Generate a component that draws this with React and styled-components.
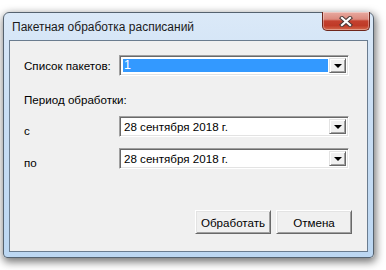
import React from 'react';
import styled, { createGlobalStyle } from 'styled-components';

const Global = createGlobalStyle`
  html, body {
    margin: 0;
    background: #ffffff;
  }
  body {
    font-family: 'Liberation Sans', Arial, sans-serif;
  }
`;

const Desktop = styled.div`
  width: 386px;
  height: 270px;
  padding: 12px 0 0 3px;
  box-sizing: border-box;
  overflow: hidden;
`;

const Window = styled.div`
  width: 371px;
  height: 246px;
  box-sizing: border-box;
  border: 1px solid #55626f;
  border-radius: 6px 6px 4px 4px;
  background: linear-gradient(to bottom, #dbe9f8 0%, #c9def4 40%, #bcd7f2 100%);
  box-shadow: 1px 3px 9px 1px rgba(0, 0, 0, 0.55);
  display: flex;
  flex-direction: column;
`;

const TitleBar = styled.div`
  height: 27px;
  display: flex;
  align-items: flex-start;
  justify-content: space-between;
  padding: 0 3px 0 8px;
`;

const Title = styled.span`
  align-self: center;
  font-size: 12px;
  line-height: 14px;
  color: #1a1a1a;
  margin-top: 1px;
`;

const CloseButton = styled.div`
  margin-top: -1px;
  width: 48px;
  height: 19px;
  box-sizing: border-box;
  border: 1px solid #6e261c;
  border-top: none;
  border-radius: 0 0 5px 5px;
  background: linear-gradient(
    to bottom,
    #e8aaa0 0%,
    #dc8a7e 40%,
    #c4412f 50%,
    #bf3a27 75%,
    #d4694d 100%
  );
  box-shadow: inset 0 0 0 1px rgba(255, 255, 255, 0.35);
  display: flex;
  align-items: center;
  justify-content: center;
`;

const Frame = styled.div`
  flex: 1;
  padding: 0 5px 5px 5px;
  display: flex;
`;

const Client = styled.div`
  flex: 1;
  border: 1px solid #6a7c8f;
  background: #f0f0f0;
  padding: 14px 15px 17px 14px;
  display: flex;
  flex-direction: column;
  font-size: 11.6px;
  color: #000;
`;

const Row = styled.div`
  display: flex;
  align-items: center;
  margin-top: ${(p) => p.$gap || 0}px;
`;

const Label = styled.div`
  width: 95px;
  line-height: 13px;
  padding-top: ${(p) => p.$shift || 0}px;
`;

const Heading = styled.div`
  line-height: 13px;
  margin-top: 17px;
`;

const Combo = styled.div`
  width: 230px;
  height: 21px;
  box-sizing: border-box;
  border-top: 1px solid #a0a0a0;
  border-left: 1px solid #a0a0a0;
  border-right: 1px solid #ffffff;
  border-bottom: 1px solid #ffffff;
  box-shadow: inset 1px 1px 0 #696969, inset -1px -1px 0 #e3e3e3;
  background: #ffffff;
  padding: 2px;
  display: flex;
`;

const Value = styled.div`
  flex: 1;
  margin: 1px;
  padding-left: 1px;
  line-height: 13px;
  background: ${(p) => (p.$selected ? '#3399ff' : 'transparent')};
  color: ${(p) => (p.$selected ? '#ffffff' : '#000000')};
  font-size: ${(p) => (p.$selected ? '12.5px' : '11.6px')};
  white-space: nowrap;
  overflow: hidden;
`;

const Arrow = styled.div`
  width: 17px;
  box-sizing: border-box;
  background: #f0f0f0;
  border-top: 1px solid #e3e3e3;
  border-left: 1px solid #e3e3e3;
  border-right: 1px solid #696969;
  border-bottom: 1px solid #696969;
  box-shadow: inset 1px 1px 0 #ffffff, inset -1px -1px 0 #a0a0a0;
  display: flex;
  align-items: center;
  justify-content: center;

  &::after {
    content: '';
    width: 0;
    height: 0;
    border-left: 4px solid transparent;
    border-right: 4px solid transparent;
    border-top: 4px solid #000;
    margin-top: 1px;
  }
`;

const Buttons = styled.div`
  margin-top: auto;
  display: flex;
  justify-content: flex-end;
  gap: 5px;
`;

const Button = styled.div`
  width: 76px;
  height: 24px;
  box-sizing: border-box;
  background: #f0f0f0;
  border-top: 1px solid #ffffff;
  border-left: 1px solid #ffffff;
  border-right: 1px solid #696969;
  border-bottom: 1px solid #696969;
  box-shadow: inset 1px 1px 0 #e3e3e3, inset -1px -1px 0 #a0a0a0;
  display: flex;
  align-items: center;
  justify-content: center;
  font-size: 11.6px;
`;

function ComboBox({ value, selected }) {
  return (
    <Combo>
      <Value $selected={selected}>{value}</Value>
      <Arrow />
    </Combo>
  );
}

export default function App() {
  const date = '28 сентября 2018 г.';

  return (
    <Desktop>
      <Global />
      <Window>
        <TitleBar>
          <Title>Пакетная обработка расписаний</Title>
          <CloseButton>
            <svg width="14" height="11" viewBox="0 0 14 11">
              <path d="M3 2 L11 9 M11 2 L3 9" stroke="#4a3a38" strokeWidth="4.2" strokeLinecap="square" fill="none" />
              <path d="M3 2 L11 9 M11 2 L3 9" stroke="#ffffff" strokeWidth="2.2" strokeLinecap="square" fill="none" />
            </svg>
          </CloseButton>
        </TitleBar>
        <Frame>
          <Client>
            <Row>
              <Label>Список пакетов:</Label>
              <ComboBox value="1" selected />
            </Row>
            <Heading>Период обработки:</Heading>
            <Row $gap={10}>
              <Label $shift={8}>с</Label>
              <ComboBox value={date} />
            </Row>
            <Row $gap={11}>
              <Label $shift={8}>по</Label>
              <ComboBox value={date} />
            </Row>
            <Buttons>
              <Button>Обработать</Button>
              <Button>Отмена</Button>
            </Buttons>
          </Client>
        </Frame>
      </Window>
    </Desktop>
  );
}
